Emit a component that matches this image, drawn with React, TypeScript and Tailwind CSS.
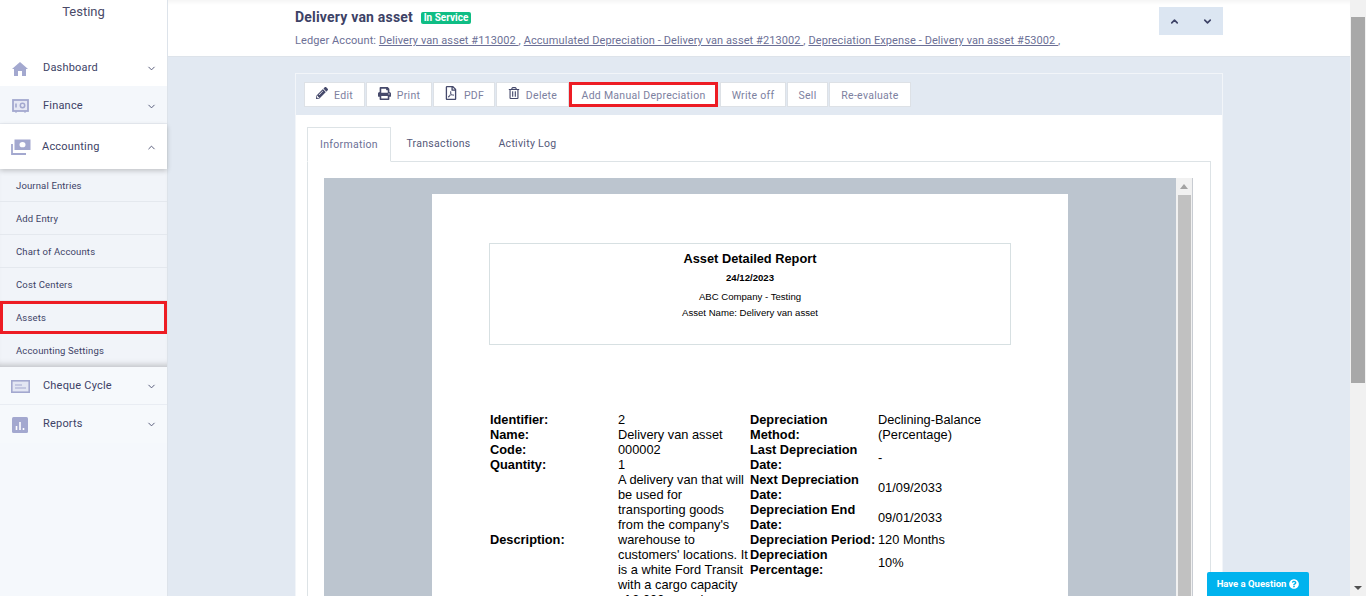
import type { ReactNode } from "react";
import { ChevronDown, ChevronUp } from "lucide-react";
import { FaPencilAlt, FaPrint, FaRegFilePdf, FaRegTrashAlt, FaQuestionCircle } from "react-icons/fa";

const HomeIcon = () => (
  <svg viewBox="0 0 16 14" className="w-[16px] h-[14px]" fill="#a3a8cf">
    <path d="M8 0 L16 7 L14 7 L14 14 L10 14 L10 9 L6 9 L6 14 L2 14 L2 7 L0 7 Z" />
  </svg>
);

const SafeIcon = () => (
  <svg viewBox="0 0 17 14" className="w-[17px] h-[14px]" fill="none" stroke="#a3a8cf">
    <rect x="1" y="1" width="15" height="11" strokeWidth="1.8" fill="#e6e8f4" />
    <circle cx="10.5" cy="6.5" r="2.2" strokeWidth="1.5" />
    <path d="M4 4.5v4" strokeWidth="1.6" />
    <path d="M3 13h2M12 13h2" strokeWidth="1.2" />
  </svg>
);

const MoneyIcon = () => (
  <svg viewBox="0 0 20 16" className="w-[20px] h-[16px]">
    <rect x="3.5" y="0.5" width="16" height="10.5" fill="#a3a8cf" />
    <ellipse cx="11.5" cy="5.7" rx="3" ry="2.6" fill="#fff" />
    <path d="M1 5v10h14" fill="none" stroke="#a3a8cf" strokeWidth="1.8" />
  </svg>
);

const ChequeIcon = () => (
  <svg viewBox="0 0 19 13" className="w-[19px] h-[13px]">
    <rect x="0.8" y="0.8" width="17.4" height="11.4" fill="#e3e6f3" stroke="#a3a8cf" strokeWidth="1.6" />
    <path d="M4 5h7M4 8h11" stroke="#a3a8cf" strokeWidth="1.2" />
  </svg>
);

const ReportIcon = () => (
  <svg viewBox="0 0 16 16" className="w-[16px] h-[16px]">
    <rect width="16" height="16" rx="1.5" fill="#a3a8cf" />
    <path d="M4.5 9v4M8 5v8M11.5 11v2" stroke="#fff" strokeWidth="1.6" />
  </svg>
);

function NavRow({ icon, label, tone }: { icon: ReactNode; label: string; tone: string }) {
  return (
    <div className={`flex items-center h-[38px] pl-[10px] pr-[10px] pt-[1px] ${tone}`}>
      <span className="w-[20px] flex justify-center">{icon}</span>
      <span className="ml-[13px] flex-1 text-[11px] tracking-[0.2px] text-[#3d4266]">{label}</span>
      <ChevronDown size={11} color="#4a4f70" />
    </div>
  );
}

const subItems = ["Journal Entries", "Add Entry", "Chart of Accounts", "Cost Centers", "Assets", "Accounting Settings"];

function Sidebar() {
  return (
    <aside className="w-[168px] shrink-0 h-full bg-[#f5f8fc] border-r border-[#dde3ea]">
      <div className="bg-white h-[48px] pt-[2px] text-center text-[13px] text-[#4a4a68]">Testing</div>
      <NavRow icon={<HomeIcon />} label="Dashboard" tone="bg-white pt-[3px]" />
      <NavRow icon={<SafeIcon />} label="Finance" tone="bg-[#f4f7fb] pt-[3px] border-b border-[#e9edf3]" />
      <div className="relative z-10 flex items-center h-[45px] pl-[10px] pr-[10px] pt-[1px] bg-white shadow-[0_2px_5px_rgba(0,0,0,0.2)]">
        <span className="w-[21px] flex justify-center"><MoneyIcon /></span>
        <span className="ml-[11px] flex-1 text-[11px] tracking-[0.2px] text-[#3d4266]">Accounting</span>
        <ChevronUp size={11} color="#4a4f70" />
      </div>
      <div className="bg-[#f1f4f9] shadow-[inset_0_-7px_6px_-5px_rgba(0,0,0,0.22)]">
        {subItems.map((item) =>
          item === "Assets" ? (
            <div key={item} className="h-[33px] flex items-center pl-[13px] pt-[1px] border-[3px] border-[#ed1c24] text-[9.5px] tracking-[0.15px] text-[#3d4266]">
              {item}
            </div>
          ) : (
            <div key={item} className="h-[33px] flex items-center pl-[16px] pt-[2px] border-b border-[#e4e8ee] last:border-b-0 text-[9.5px] tracking-[0.15px] text-[#3d4266]">
              {item}
            </div>
          ),
        )}
      </div>
      <NavRow icon={<ChequeIcon />} label="Cheque Cycle" tone="bg-[#f6f9fc] border-b border-[#e9edf3]" />
      <NavRow icon={<ReportIcon />} label="Reports" tone="bg-[#f6f9fc]" />
    </aside>
  );
}

const ledgerLinks = [
  "Delivery van asset #113002 ",
  "Accumulated Depreciation - Delivery van asset #213002 ",
  "Depreciation Expense - Delivery van asset #53002 ",
];

function Header() {
  return (
    <header className="h-[57px] shrink-0 bg-white border-b border-[#dde3ea] pl-[127px] pr-[127px] flex justify-between shadow-[inset_0_5px_4px_-3px_rgba(0,0,0,0.05)]">
      <div>
        <div className="mt-[9px] flex items-center h-[17px]">
          <span className="text-[14px] tracking-[0.2px] font-bold text-[#3d4266]">Delivery van asset</span>
          <span className="ml-[8px] h-[12px] w-[50px] flex items-center justify-center rounded-[2px] bg-[#0fbd84] text-[10px] font-bold text-white">In Service</span>
        </div>
        <div className="mt-[7px] text-[11px] tracking-[0.085px] text-[#6c7096] whitespace-pre">
          Ledger Account:{" "}
          {ledgerLinks.map((l) => (
            <span key={l}>
              <span className="underline">{l}</span>,{" "}
            </span>
          ))}
        </div>
      </div>
      <div className="mt-[7px] w-[64px] h-[28px] bg-[#dce6f2] flex items-center justify-between px-[10px]">
        <ChevronUp size={11} strokeWidth={3.5} color="#3d4266" />
        <ChevronDown size={11} strokeWidth={3.5} color="#3d4266" />
      </div>
    </header>
  );
}

function ToolButton({ icon, label, width, alert }: { icon?: ReactNode; label: string; width: string; alert?: boolean }) {
  return (
    <div
      className={`${width} h-[25px] flex items-center justify-center gap-[6px] bg-white text-[10.5px] tracking-[0.28px] text-[#7d819f] ${
        alert ? "border-[3px] border-[#ed1c24]" : "border border-[#dde1e6]"
      }`}
    >
      {icon && <span className="-mt-[3px]">{icon}</span>}
      <span className="mt-[2px]">{label}</span>
    </div>
  );
}

function Toolbar() {
  return (
    <div className="h-[41px] bg-[#e2e9f2] pl-[8px] pt-[8px] flex">
      <ToolButton width="w-[61px]" label="Edit" icon={<FaPencilAlt size={12} color="#45496b" />} />
      <span className="w-[1px]" />
      <ToolButton width="w-[66px]" label="Print" icon={<FaPrint size={13} color="#45496b" />} />
      <span className="w-[1px]" />
      <ToolButton width="w-[62px]" label="PDF" icon={<FaRegFilePdf size={14} color="#45496b" />} />
      <span className="w-[1px]" />
      <ToolButton width="w-[73px]" label="Delete" icon={<FaRegTrashAlt size={12} color="#45496b" />} />
      <ToolButton width="w-[149px]" label="Add Manual Depreciation" alert />
      <span className="w-[2px]" />
      <ToolButton width="w-[66px]" label="Write off" />
      <span className="w-[1px]" />
      <ToolButton width="w-[41px]" label="Sell" />
      <span className="w-[1px]" />
      <ToolButton width="w-[82px]" label="Re-evaluate" />
    </div>
  );
}

function Tabs() {
  return (
    <div className="flex h-[35px] pl-[11px] text-[10.5px] tracking-[0.3px]">
      <div className="relative z-10 w-[84px] h-[35px] flex items-center justify-center bg-white border border-[#dde3e6] border-b-white text-[#6c7096]">Information</div>
      <div className="w-[95px] flex items-center justify-center border-b border-[#dde3e6] text-[#55597a]">Transactions</div>
      <div className="w-[83px] flex items-center justify-center border-b border-[#dde3e6] text-[#55597a]">Activity Log</div>
    </div>
  );
}

function Label({ children }: { children: ReactNode }) {
  return <td className="font-bold align-middle p-0">{children}</td>;
}

function Cell({ children }: { children: ReactNode }) {
  return <td className="align-middle p-0">{children}</td>;
}

function ReportPage() {
  return (
    <div className="w-[636px] bg-white pt-[49px] pl-[57px] pr-[57px] [font-family:Liberation_Sans,Arial,sans-serif] text-black">
      <div className="h-[102px] border border-[#d7e0e2] text-center pt-[6px]">
        <div className="text-[12.8px] leading-[17px] font-bold">Asset Detailed Report</div>
        <div className="mt-[5px] text-[9.6px] leading-[12px] font-bold">24/12/2023</div>
        <div className="mt-[7px] text-[9.6px] leading-[12px]">ABC Company - Testing</div>
        <div className="mt-[4px] text-[9.6px] leading-[12px]">Asset Name: Delivery van asset</div>
      </div>
      <div className="mt-[67px] ml-[1px] flex text-[12.8px] leading-[15px] items-start">
        <table className="w-[260px] table-fixed border-collapse">
          <colgroup>
            <col className="w-[128px]" />
            <col className="w-[132px]" />
          </colgroup>
          <tbody>
            <tr><Label>Identifier:</Label><Cell>2</Cell></tr>
            <tr><Label>Name:</Label><Cell>Delivery van asset</Cell></tr>
            <tr><Label>Code:</Label><Cell>000002</Cell></tr>
            <tr><Label>Quantity:</Label><Cell>1</Cell></tr>
            <tr>
              <Label>Description:</Label>
              <Cell>
                A delivery van that will be used for transporting goods from the company's warehouse to customers' locations. It is a white Ford Transit with a cargo capacity of 2,000 pounds.
              </Cell>
            </tr>
          </tbody>
        </table>
        <table className="w-[260px] table-fixed border-collapse">
          <colgroup>
            <col className="w-[128px]" />
            <col className="w-[132px]" />
          </colgroup>
          <tbody>
            <tr><Label>Depreciation Method:</Label><Cell>Declining-Balance (Percentage)</Cell></tr>
            <tr><Label>Last Depreciation Date:</Label><Cell>-</Cell></tr>
            <tr><Label>Next Depreciation Date:</Label><Cell>01/09/2033</Cell></tr>
            <tr><Label>Depreciation End Date:</Label><Cell>09/01/2033</Cell></tr>
            <tr><td className="font-bold p-0 whitespace-nowrap">Depreciation Period:</td><Cell>120 Months</Cell></tr>
            <tr><Label>Depreciation Percentage:</Label><Cell>10%</Cell></tr>
          </tbody>
        </table>
      </div>
    </div>
  );
}

function ReportFrame() {
  return (
    <div className="flex mr-[17px] h-[600px]">
      <div className="flex-1 bg-[#bcc5cf] pt-[16px] flex justify-center">
        <ReportPage />
      </div>
      <div className="w-[17px] bg-[#f1f1f1] border-r border-[#c8ccd2] flex flex-col items-center">
        <div className="h-[17px] flex items-center justify-center">
          <span className="w-0 h-0 border-x-[4px] border-x-transparent border-b-[5px] border-b-[#a3a3a3]" />
        </div>
        <div className="w-[13px] flex-1 bg-[#c1c1c1]" />
      </div>
    </div>
  );
}

function Card() {
  return (
    <section className="w-[928px] h-[600px] bg-white border border-[#f2f5f9]">
      <Toolbar />
      <div className="pt-[12px]">
        <Tabs />
        <div className="ml-[11px] mr-[11px] -mt-[1px] border border-[#dde3e6] pl-[16px] pt-[16px] h-[600px]">
          <ReportFrame />
        </div>
      </div>
    </section>
  );
}

function PageScrollbar() {
  return (
    <div className="w-[16px] shrink-0 h-full bg-[#f1f1f1] flex flex-col items-center">
      <div className="h-[17px]" />
      <div className="w-[14px] h-[366px] bg-[#a8a8a8]" />
      <div className="flex-1" />
      <div className="h-[17px] flex items-center justify-center">
        <span className="w-0 h-0 border-x-[4px] border-x-transparent border-t-[4px] border-t-[#505050]" />
      </div>
    </div>
  );
}

export default function App() {
  return (
    <div className="relative w-[1366px] h-[596px] overflow-hidden flex bg-[#e2e9f2] [font-family:Roboto,sans-serif]">
      <Sidebar />
      <main className="flex-1 h-full flex flex-col overflow-hidden">
        <Header />
        <div className="pl-[127px] pt-[16px]">
          <Card />
        </div>
      </main>
      <PageScrollbar />
      <div className="absolute left-[1207px] top-[572px] w-[102px] h-[24px] rounded-t-[2px] bg-[#00b3ee] flex items-center justify-center gap-[3px] text-[9.5px] font-bold text-white">
        Have a Question <FaQuestionCircle size={10} color="#fff" />
      </div>
    </div>
  );
}
